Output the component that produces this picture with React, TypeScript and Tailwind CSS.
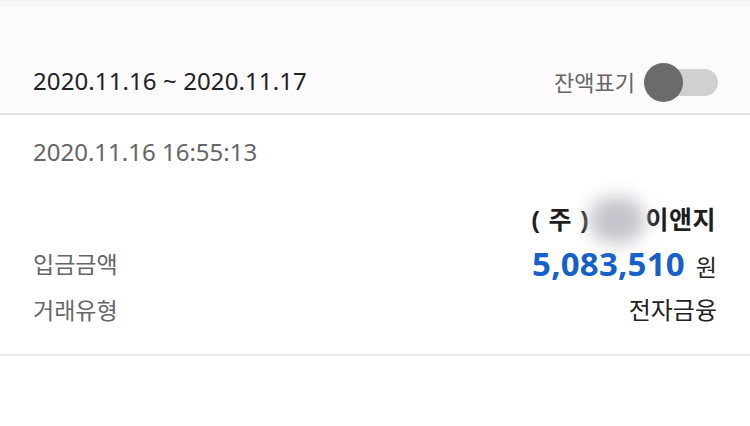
export default function App() {
  const font = { fontFamily: '"Noto Sans", "Noto Sans CJK KR", sans-serif' };

  return (
    <div className="w-[750px] h-[426px] bg-white overflow-hidden" style={font}>
      {/* top strip */}
      <div className="h-[6px] bg-[#f6f6f7]" />

      {/* period header */}
      <div className="h-[109px] bg-[#fdfafd] border-b-2 border-[#e2e2e2] flex items-end justify-between pl-[33px] pr-[32px] pb-[11px]">
        <span className="text-[24px] leading-[34px] text-[#222] tracking-[0.1px] mb-[4px]">
          2020.11.16 ~ 2020.11.17
        </span>
        <div className="flex items-center gap-[9px]">
          <span className="text-[22px] leading-[30px] text-[#666]">잔액표기</span>
          <div className="relative w-[74px] h-[40px] flex items-center">
            <div className="absolute left-[6px] right-0 h-[27px] rounded-full bg-[#d0d0d0]" />
            <div className="absolute left-0 w-[39px] h-[39px] rounded-full bg-[#6b6b6b]" />
          </div>
        </div>
      </div>

      {/* transaction */}
      <div className="border-b-2 border-[#e8e8e8] px-[33px] pt-[20px] pb-[21px]">
        <div className="text-[24px] leading-[34px] text-[#666]">2020.11.16 16:55:13</div>

        <div className="mt-[26px] h-[46px] flex items-center justify-end pr-[1px] pt-[3px]">
          <span className="text-[25px] font-bold text-[#1e1e1e] whitespace-pre tracking-[1px]">( 주 )</span>
          <span className="inline-block w-[56px] h-[46px] rounded-full bg-[#c3c4cb] blur-[9px]" />
          <span className="text-[25px] font-bold text-[#1e1e1e] tracking-[0.5px]">이앤지</span>
        </div>

        <div className="h-[46px] flex items-center justify-between">
          <span className="text-[23px] text-[#666]">입금금액</span>
          <span className="flex items-baseline gap-[11px]">
            <span className="text-[33px] font-bold text-[#1660c9] tracking-[0.2px]">5,083,510</span>
            <span className="text-[23px] text-[#222]">원</span>
          </span>
        </div>

        <div className="h-[46px] flex items-center justify-between">
          <span className="text-[23px] text-[#666]">거래유형</span>
          <span className="text-[24px] text-[#222]">전자금융</span>
        </div>
      </div>
    </div>
  );
}
